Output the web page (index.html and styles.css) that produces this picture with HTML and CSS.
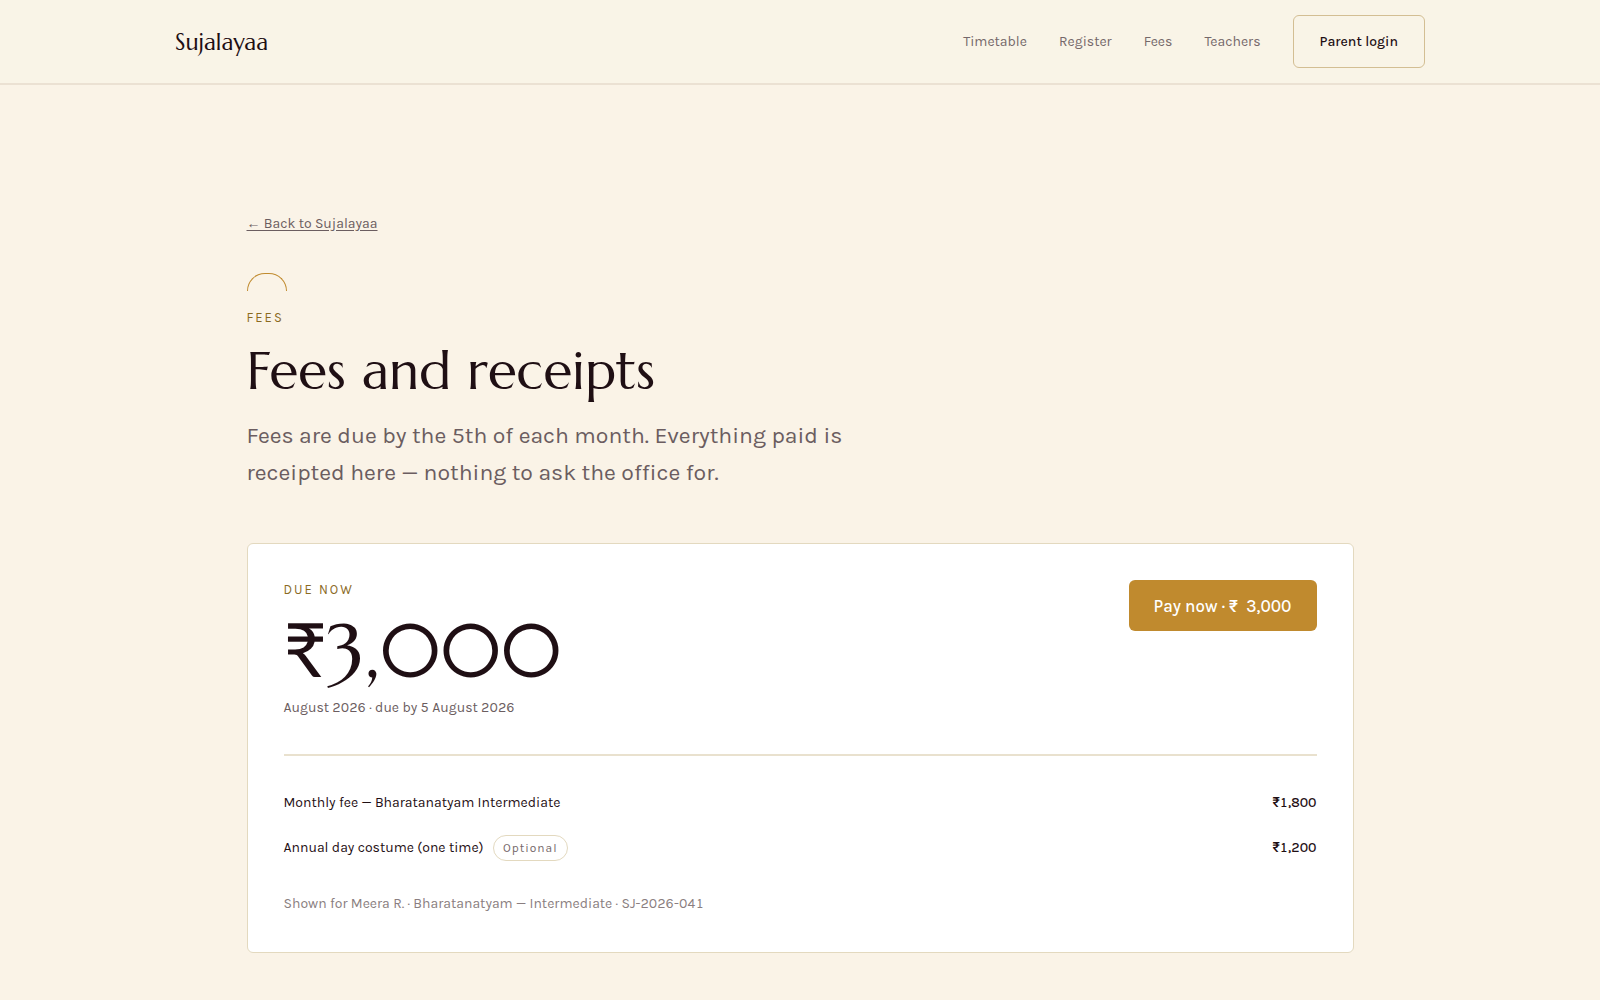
FILE: index.html
```html
<!DOCTYPE html>
<html lang="en">
	<head>
		<meta charset="utf-8" />
		<meta name="viewport" content="width=device-width, initial-scale=1" />
		<title>Fees and receipts - Sujalayaa</title>
		<link rel="stylesheet" href="styles.css">
	</head>
	<body>
		<header class="site-header">
			<div class="header-inner">
				<a class="brand" href="#">Sujalayaa</a>
				<nav class="site-nav">
					<a href="#">Timetable</a>
					<a href="#">Register</a>
					<a href="#">Fees</a>
					<a href="#">Teachers</a>
					<button class="btn-login" type="button">Parent login</button>
				</nav>
			</div>
		</header>
		<main class="page">
			<a class="back-link" href="#">← Back to Sujalayaa</a>
			<div class="arch"></div>
			<p class="eyebrow">Fees</p>
			<h1>Fees and receipts</h1>
			<p class="lead">Fees are due by the 5th of each month. Everything paid is receipted here — nothing to ask the office for.</p>
			<section class="card">
				<div class="due">
					<div>
						<p class="eyebrow">Due now</p>
						<p class="amount">₹3,000</p>
						<p class="due-date">August 2026 · due by 5 August 2026</p>
					</div>
					<button class="btn-pay" type="button">Pay now · ₹&nbsp; 3,000</button>
				</div>
				<table class="fee-lines">
					<tr>
						<td>Monthly fee — Bharatanatyam Intermediate</td>
						<td class="price">₹1,800</td>
					</tr>
					<tr>
						<td>Annual day costume (one time) <span class="tag">Optional</span></td>
						<td class="price">₹1,200</td>
					</tr>
				</table>
				<p class="shown-for">Shown for Meera R. · Bharatanatyam — Intermediate · SJ-2026-041</p>
			</section>
		</main>
	</body>
</html>
```

FILE: styles.css
```css
* {
	box-sizing: border-box;
}
body {
	margin: 0;
	background-color: #FAF3E7;
	color: #1F0F14;
	font-family: Karla, Roboto, sans-serif;
	font-size: 14px;
	line-height: 24px;
}
p, h1 {
	margin: 0;
}
.site-header {
	background-color: #F9F4E7;
	border-bottom: 2px solid #EBE1D3;
}
.header-inner {
	display: flex;
	align-items: center;
	justify-content: space-between;
	max-width: 1298px;
	margin: 0 auto;
	padding: 15px 24px;
}
.brand {
	color: #1F0F14;
	font-family: Marcellus, Lato, sans-serif;
	font-size: 23px;
	text-decoration: none;
}
.site-nav {
	display: flex;
	align-items: center;
	gap: 32px;
}
.site-nav a {
	color: #75686A;
	text-decoration: none;
}
button {
	font-family: inherit;
	font-weight: 500;
	border-radius: 6px;
	cursor: pointer;
}
.btn-login {
	height: 53px;
	padding: 0 26px;
	border: 1px solid #D3BE93;
	background: transparent;
	color: #1F0F14;
	font-size: 14px;
}
.page {
	max-width: 1155px;
	margin: 0 auto;
	padding: 127px 24px 48px;
}
.back-link {
	color: #6B5D60;
	text-underline-offset: 2px;
}
.arch {
	width: 40px;
	height: 18px;
	margin: 37px 0 17px;
	border: 1px solid #C08A2E;
	border-bottom: none;
	border-radius: 20px 20px 0 0;
}
.eyebrow {
	color: #8A6A1F;
	font-size: 13px;
	line-height: 20px;
	letter-spacing: 2px;
	text-transform: uppercase;
}
h1 {
	margin: 13px 0 16px;
	font-family: Marcellus, Lato, sans-serif;
	font-size: 53px;
	font-weight: 400;
	line-height: 60px;
}
.lead {
	max-width: 640px;
	color: #6B5D60;
	font-size: 23px;
	line-height: 37px;
}
.card {
	margin-top: 52px;
	padding: 36px;
	border: 1px solid #E3D9BF;
	border-radius: 6px;
	background-color: #FFFFFF;
}
.due {
	display: flex;
	align-items: flex-start;
	justify-content: space-between;
	padding-bottom: 34px;
	border-bottom: 2px solid #E9E1CE;
}
.amount {
	margin: 11px 0 5px;
	font-family: Marcellus, Lato, sans-serif;
	font-size: 75px;
	line-height: 80px;
}
.due-date {
	color: #6B5D60;
	font-variant-numeric: tabular-nums;
}
.btn-pay {
	height: 51px;
	padding: 0 25px;
	border: none;
	background-color: #C08A2E;
	color: #FFFFFF;
	font-size: 17px;
}
.fee-lines {
	width: 100%;
	margin: 24px 0 22px;
	border-collapse: collapse;
}
.fee-lines td {
	height: 45px;
	padding: 0;
}
.fee-lines .price {
	font-weight: 500;
	font-variant-numeric: tabular-nums;
	text-align: right;
}
.tag {
	display: inline-block;
	margin-left: 6px;
	padding: 0 9px;
	border: 1px solid #E3D9BF;
	border-radius: 13px;
	color: #75686A;
	font-size: 12px;
	letter-spacing: 1px;
}
.shown-for {
	color: #8A7E80;
	font-variant-numeric: tabular-nums;
}
```
